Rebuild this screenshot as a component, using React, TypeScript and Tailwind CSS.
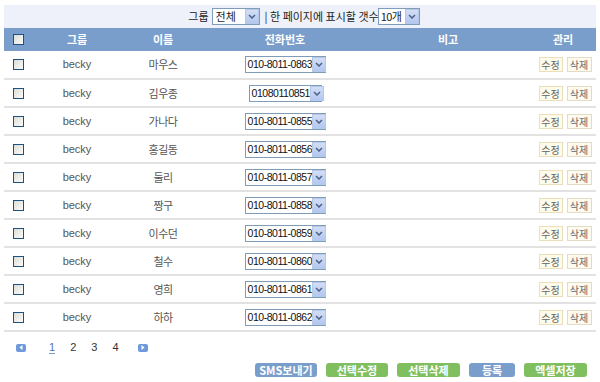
import React from "react";

const rows = [
  { name: "마우스", phone: "010-8011-0863" },
  { name: "김우종", phone: "01080110851", narrow: true },
  { name: "가나다", phone: "010-8011-0855" },
  { name: "홍길동", phone: "010-8011-0856" },
  { name: "둘리", phone: "010-8011-0857" },
  { name: "짱구", phone: "010-8011-0858" },
  { name: "이수던", phone: "010-8011-0859" },
  { name: "철수", phone: "010-8011-0860" },
  { name: "영희", phone: "010-8011-0861" },
  { name: "하하", phone: "010-8011-0862" },
];

const font = { fontFamily: '"Noto Sans CJK KR", "Noto Sans", sans-serif' };
const latin = { fontFamily: '"Liberation Sans", Arial, sans-serif' };

function Check() {
  return (
    <span className="inline-block w-[11px] h-[11px] border border-[#1c5180] bg-gradient-to-br from-[#dcdcd7] to-[#fbfbfb]" />
  );
}

function Arrow({ w = 16, h = 15 }: { w?: number; h?: number }) {
  return (
    <span
      className="flex items-center justify-center bg-gradient-to-b from-[#d3def5] to-[#b3c8ef] border border-[#b6c8ea] shrink-0"
      style={{ width: w, height: h }}
    >
      <svg width="8" height="5" viewBox="0 0 8 5">
        <path d="M1 1 L4 4 L7 1" stroke="#4d6185" strokeWidth="1.5" fill="none" />
      </svg>
    </span>
  );
}

function Select({ text, w }: { text: string; w: number }) {
  return (
    <div
      className="flex items-center justify-between bg-white border border-[#7f9db9] h-[17px] pl-[2px] whitespace-nowrap"
      style={{ width: w }}
    >
      <span className="text-[10.5px] tracking-[-0.45px] text-[#111] leading-none" style={latin}>
        {text}
      </span>
      <Arrow w={14} h={15} />
    </div>
  );
}

function PageArrow({ right }: { right?: boolean }) {
  return (
    <span className="flex items-center justify-center w-[10px] h-[8px] rounded-[2px] bg-[#6f9ad9]">
      <svg width="4" height="5" viewBox="0 0 4 5">
        {right ? <path d="M0.5 0 L3.5 2.5 L0.5 5Z" fill="#fff" /> : <path d="M3.5 0 L0.5 2.5 L3.5 5Z" fill="#fff" />}
      </svg>
    </span>
  );
}

export default function App() {
  const grid = "grid grid-cols-[28px_90px_82px_162px_164px_66px]";
  return (
    <div className="w-[600px] h-[382px] bg-white px-[4px] pt-[5px]" style={font}>
      <div className="h-[23px] bg-[#eef1f9] flex items-center justify-center text-[11px] text-[#222] gap-[3px] pl-[8px]">
        <span>그룹</span>
        <div className="flex items-center justify-between bg-white border border-[#7f9db9] h-[17px] w-[48px] pl-[3px]">
          <span className="text-[11px] leading-none">전체</span>
          <Arrow w={14} h={15} />
        </div>
        <span className="ml-[2px]">| 한 페이지에 표시할 갯수</span>
        <div className="flex items-center justify-between bg-white border border-[#7f9db9] h-[17px] w-[42px] pl-[2px] -ml-[4px]">
          <span className="text-[11px] leading-none tracking-[-0.5px]">10개</span>
          <Arrow w={14} h={15} />
        </div>
      </div>
      <div className={`${grid} h-[23px] bg-[#7a9ecb] items-center text-[11px] font-bold text-white text-center`}>
        <div className="flex justify-center items-center"><Check /></div>
        <div>그룹</div>
        <div>이름</div>
        <div>전화번호</div>
        <div>비고</div>
        <div>관리</div>
      </div>
      {rows.map((r, i) => (
        <div
          key={i}
          className={`${grid} ${i === 0 ? "h-[29px]" : "h-[28px]"} items-center border-b-2 border-[#e2e2e2] text-[11px] text-[#555] text-center`}
        >
          <div className="flex justify-center items-center"><Check /></div>
          <div style={latin} className="text-[11px]">becky</div>
          <div className="tracking-[-0.5px]">{r.name}</div>
          <div className="flex justify-center">
            <Select text={r.phone} w={r.narrow ? 73 : 81} />
          </div>
          <div />
          <div className="flex justify-center gap-[4px] pl-[4px]">
            <span className="w-[24px] h-[15px] border border-[#eadfb8] bg-[#fffbea] text-[10px] leading-[13px] text-[#666]">수정</span>
            <span className="w-[25px] h-[15px] border border-[#e2dcc6] bg-[#fdfaf0] text-[10px] leading-[13px] text-[#666]">삭제</span>
          </div>
        </div>
      ))}
      <div className="flex items-center h-[31px] pl-[12px] text-[11px] text-[#333]" style={latin}>
        <PageArrow />
        <span className="ml-[23px] text-[#4f73b1] underline underline-offset-2 decoration-[#7f9fd1]">1</span>
        <span className="ml-[15px]">2</span>
        <span className="ml-[15px]">3</span>
        <span className="ml-[15px]">4</span>
        <span className="ml-[19px]"><PageArrow right /></span>
      </div>
      <div className="flex justify-end items-center gap-[9px] pr-[9px] text-[11px] font-bold text-white">
        <span className="w-[62px] h-[14px] rounded-[3px] bg-[#7a9ecb] flex items-center justify-center leading-none">SMS보내기</span>
        <span className="w-[62px] h-[14px] rounded-[3px] bg-[#7fbf5f] flex items-center justify-center leading-none">선택수정</span>
        <span className="w-[63px] h-[14px] rounded-[3px] bg-[#7fbf5f] flex items-center justify-center leading-none">선택삭제</span>
        <span className="w-[46px] h-[14px] rounded-[3px] bg-[#7a9ecb] flex items-center justify-center leading-none">등록</span>
        <span className="w-[63px] h-[14px] rounded-[3px] bg-[#7fbf5f] flex items-center justify-center leading-none">엑셀저장</span>
      </div>
    </div>
  );
}
